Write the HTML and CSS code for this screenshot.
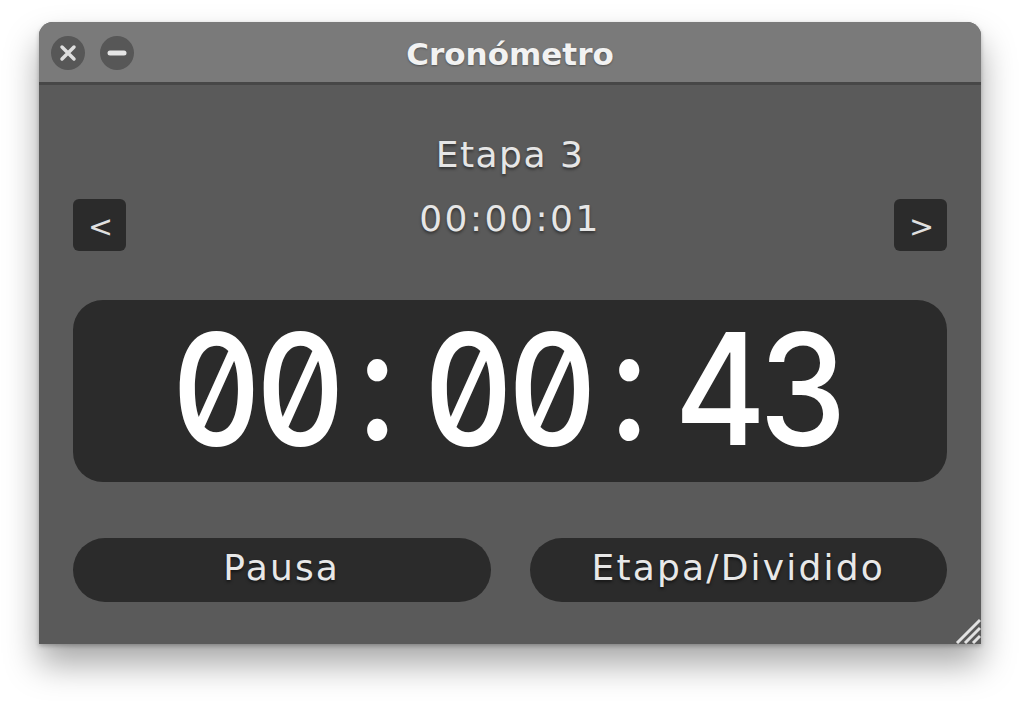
FILE: index.html
```html
<!DOCTYPE html>
<html lang="es">
<head>
    <meta charset="UTF-8">
    <meta name="viewport" content="width=device-width, initial-scale=1.0">
    <title>Cronómetro</title>
    <link rel="stylesheet" href="styles.css">
</head>
<body>
<div class="window">
    <div class="titlebar">
        <div class="controls">
            <span class="ctrl">
                <svg width="34" height="34" viewBox="0 0 34 34"><path d="M11 11 L23 23 M23 11 L11 23" stroke="#dedede" stroke-width="3.5" stroke-linecap="round"/></svg>
            </span>
            <span class="ctrl">
                <svg width="34" height="34" viewBox="0 0 34 34"><path d="M10 17 H24" stroke="#e6e6e6" stroke-width="5" stroke-linecap="round"/></svg>
            </span>
        </div>
        <div class="title">Cronómetro</div>
        <div></div>
    </div>

    <div class="content">
        <div class="stage-name">Etapa <span id="stageNum">3</span></div>
        <div class="stage-row">
            <button class="nav" id="prevStage">&lt;</button>
            <div class="stage-time" id="stageTime">00:00:01</div>
            <button class="nav" id="nextStage">&gt;</button>
        </div>

        <div class="display" id="display">
            <span>0</span><span>0</span><span class="sep">:</span><span>0</span><span>0</span><span class="sep">:</span><span>4</span><span>3</span>
        </div>

        <div class="actions">
            <button class="pill" id="pauseBtn">Pausa</button>
            <button class="pill" id="splitBtn">Etapa/Dividido</button>
        </div>
    </div>

    <svg class="grip" width="34" height="34" viewBox="0 0 34 34">
        <path d="M10 33 L33 10 M18 33 L33 18 M26 33 L33 26" stroke="#e2e2e2" stroke-width="3"/>
    </svg>
</div>
</body>
</html>
```

FILE: styles.css
```css
html, body {
    min-height: 100vh;
}
body {
    margin: 0;
    padding: 22px 0 60px 39px;
    box-sizing: border-box;
    background-color: #fff;
    font-family: "DejaVu Sans", Verdana, sans-serif;
}
.window {
    position: relative;
    width: 942px;
    height: 622px;
    background-color: #5a5a5a;
    border-radius: 14px 14px 0 0;
    box-shadow: 0 20px 34px rgba(0, 0, 0, 0.35), 0 2px 4px rgba(0, 0, 0, 0.25);
    display: flex;
    flex-direction: column;
    overflow: hidden;
}
.titlebar {
    height: 60px;
    background-color: #7a7a7a;
    border-bottom: 3px solid #474747;
    display: grid;
    grid-template-columns: 1fr auto 1fr;
    align-items: center;
    padding: 0 12px;
}
.controls {
    display: flex;
    gap: 15px;
    margin-top: 2px;
}
.ctrl {
    width: 34px;
    height: 34px;
    border-radius: 50%;
    background-color: #575757;
    display: flex;
}
.title {
    color: #f2f2f2;
    font-weight: bold;
    font-size: 31px;
    margin-top: 3px;
    text-shadow: 0 1px 2px rgba(0, 0, 0, 0.35);
}
.content {
    padding: 48px 34px 0;
    display: flex;
    flex-direction: column;
}
.stage-name {
    text-align: center;
    color: #e6e6e6;
    font-size: 36px;
    letter-spacing: 1.5px;
    line-height: 44px;
    text-shadow: 0 2px 3px rgba(0, 0, 0, 0.45);
}
.stage-row {
    margin-top: 22px;
    display: flex;
    justify-content: space-between;
    align-items: flex-start;
}
.stage-time {
    color: #e6e6e6;
    font-size: 36px;
    letter-spacing: 2.5px;
    line-height: 40px;
    text-shadow: 0 2px 3px rgba(0, 0, 0, 0.45);
}
button {
    font-family: inherit;
    border: none;
    cursor: pointer;
}
.nav {
    width: 53px;
    height: 52px;
    padding: 0 0 0 2px;
    background-color: #2b2b2b;
    border-radius: 6px;
    color: #e0e0e0;
    font-size: 30px;
    line-height: 56px;
}
.display {
    margin-top: 49px;
    height: 182px;
    padding-right: 14px;
    background-color: #2b2b2b;
    border-radius: 30px;
    color: #fff;
    font-family: Inter, "DejaVu Sans Mono", monospace;
    font-feature-settings: "zero" 1, "tnum" 1;
    font-size: 155px;
    font-weight: 500;
    line-height: 178px;
    display: flex;
    justify-content: center;
}
.display span {
    width: 84px;
    text-align: center;
    transform: scaleX(0.9);
}
.display .sep {
    position: relative;
    top: -5px;
}
.actions {
    margin-top: 56px;
    display: flex;
    gap: 39px;
}
.pill {
    flex: 1;
    height: 64px;
    padding-bottom: 7px;
    background-color: #2b2b2b;
    border-radius: 32px;
    color: #e8e8e8;
    font-size: 36px;
    letter-spacing: 2.2px;
    text-shadow: 0 2px 3px rgba(0, 0, 0, 0.5);
}
.grip {
    position: absolute;
    right: 0;
    bottom: 0;
}
```
